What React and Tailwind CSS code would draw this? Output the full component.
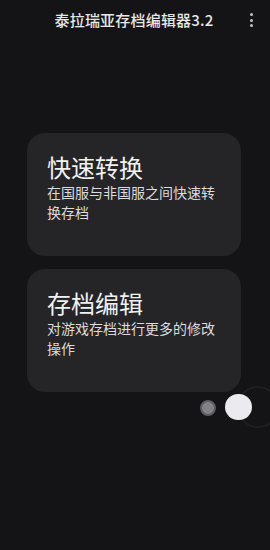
const FONT = { fontFamily: "'Noto Sans CJK SC', 'Noto Sans', sans-serif" };

const CARDS = [
  { title: '快速转换', desc: '在国服与非国服之间快速转换存档' },
  { title: '存档编辑', desc: '对游戏存档进行更多的修改操作' },
];

function Card({ title, desc }) {
  return (
    <div className="h-[123px] rounded-[18px] bg-[#252427] px-5 pt-[19px]">
      <h2 className="text-[24px] leading-[30px] font-normal text-[#f1f1f1]">{title}</h2>
      <p className="text-[14px] leading-[20px] text-[#dcdcdc]">{desc}</p>
    </div>
  );
}

export default function App() {
  return (
    <div className="w-[270px] h-[550px] bg-[#141316] overflow-hidden relative" style={FONT}>
      {/* toolbar */}
      <div className="relative h-[40px] flex items-center justify-center">
        <span className="ml-[-2px] text-[15px] font-medium text-[#e8e8e8] tracking-[0.2px]">泰拉瑞亚存档编辑器3.2</span>
        <div className="absolute right-[17px] top-[13px] flex flex-col gap-[2.5px]">
          <span className="w-[3px] h-[3px] rounded-full bg-[#c4c4c4]" />
          <span className="w-[3px] h-[3px] rounded-full bg-[#c4c4c4]" />
          <span className="w-[3px] h-[3px] rounded-full bg-[#c4c4c4]" />
        </div>
      </div>

      {/* cards */}
      <div className="mt-[93px] ml-[27px] w-[214px] flex flex-col gap-[13px]">
        {CARDS.map((c) => (
          <Card key={c.title} {...c} />
        ))}
      </div>

      {/* floating toggles */}
      <div className="absolute left-[200px] top-[400px] w-[16px] h-[16px] rounded-full bg-[#838286] border-[2px] border-[#5d5c60] blur-[0.7px]" />
      <div className="absolute left-[237px] top-[386px] w-[42px] h-[42px] rounded-full border-[2px] border-[#1f1e22]" />
      <div className="absolute left-[225px] top-[394px] w-[27px] h-[26px] rounded-full bg-[#ebeaef]" />
    </div>
  );
}
